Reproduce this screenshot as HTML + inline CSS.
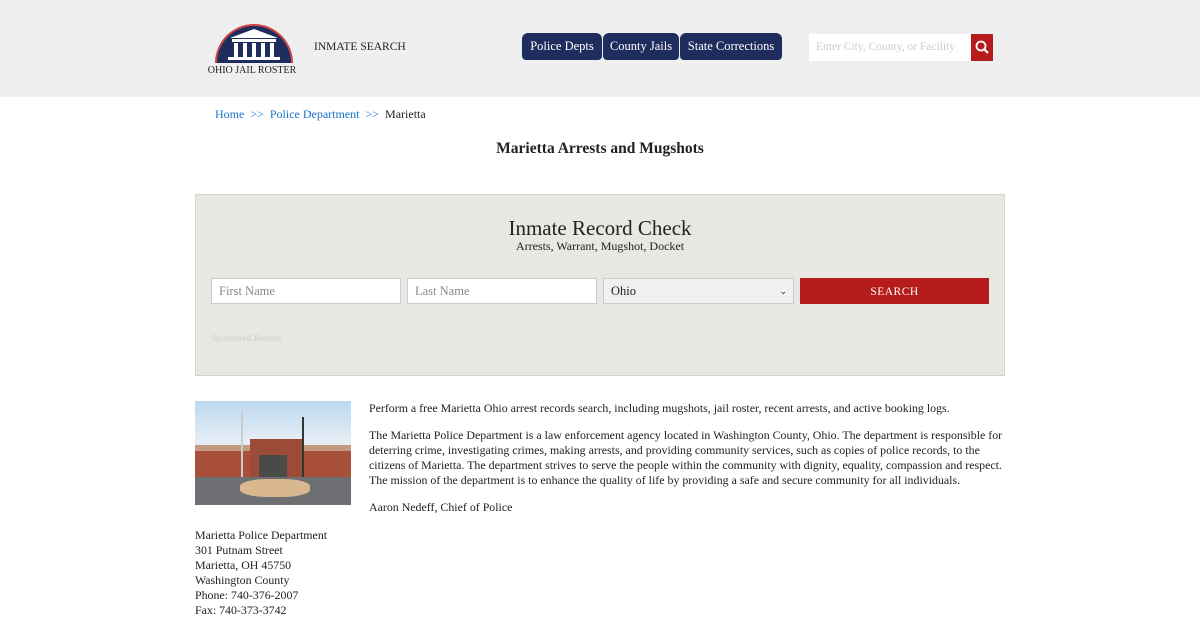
<!DOCTYPE html>
<html><head><meta charset="utf-8"><style>
*{box-sizing:border-box;margin:0;padding:0}
body{width:1200px;height:620px;overflow:hidden;background:#fff;font-family:"Liberation Serif",serif;color:#222}
.hdr{position:absolute;left:0;top:0;width:1200px;height:97px;background:#efefef}
.abs{position:absolute}
.tab{position:absolute;top:33px;height:27px;background:#1f2d5e;color:#fff;font-size:12.5px;line-height:27px;text-align:center;border-radius:6px 6px 4px 4px}
.inp{position:absolute;top:278px;height:26px;background:#fff;border:1px solid #ccc;font-size:12.5px;color:#888;line-height:24px;padding-left:7px}
p{font-size:11.9px;line-height:15px}
</style></head><body>
<div class="hdr"></div>
<svg class="abs" style="left:208px;top:20px" width="92" height="58" viewBox="0 0 92 58">
<defs><clipPath id="c"><rect x="0" y="0" width="92" height="43"/></clipPath></defs>
<circle cx="46" cy="43" r="39" fill="#c44" clip-path="url(#c)"/>
<circle cx="46" cy="43" r="37" fill="#1f2d5e" clip-path="url(#c)"/>
<polygon points="22,18 46,9 70,18" fill="#fff"/>
<rect x="24" y="19" width="44" height="3" fill="#fff"/>
<rect x="26" y="23" width="4" height="14" fill="#fff"/><rect x="35" y="23" width="4" height="14" fill="#fff"/><rect x="44" y="23" width="4" height="14" fill="#fff"/><rect x="53" y="23" width="4" height="14" fill="#fff"/><rect x="62" y="23" width="4" height="14" fill="#fff"/>
<rect x="20" y="37" width="52" height="3" fill="#fff"/>
<text x="44" y="53" font-family="Liberation Serif" font-size="10" text-anchor="middle" fill="#222">OHIO JAIL ROSTER</text>
</svg>
<div class="abs" style="left:314px;top:41px;font-size:11.5px">INMATE SEARCH</div>
<div class="tab" style="left:522px;width:80px">Police Depts</div>
<div class="tab" style="left:603px;width:76px">County Jails</div>
<div class="tab" style="left:680px;width:102px">State Corrections</div>
<div class="abs" style="left:809px;top:34px;width:162px;height:27px;background:#fff;font-size:11.5px;color:#ccc;line-height:27px;padding-left:7px">Enter City, County, or Facility</div>
<div class="abs" style="left:971px;top:34px;width:22px;height:27px;background:#b71c1c"><svg width="22" height="27"><circle cx="10" cy="12" r="4.5" stroke="#fff" stroke-width="1.8" fill="none"/><line x1="13.5" y1="15.5" x2="17" y2="19" stroke="#fff" stroke-width="2.2"/></svg></div>
<div class="abs" style="left:215px;top:107px;font-size:12px"><span style="color:#1a73c8">Home &nbsp;&gt;&gt;&nbsp; Police Department &nbsp;&gt;&gt;&nbsp;</span> Marietta</div>
<div class="abs" style="left:0;width:1200px;top:140px;text-align:center;font-size:15.5px;font-weight:bold">Marietta Arrests and Mugshots</div>
<div class="abs" style="left:195px;top:194px;width:810px;height:182px;background:#e8e7e2;border:1px solid #d4d3cc"></div>
<div class="abs" style="left:195px;width:810px;top:216px;text-align:center;font-size:21px">Inmate Record Check</div>
<div class="abs" style="left:195px;width:810px;top:239px;text-align:center;font-size:12px">Arrests, Warrant, Mugshot, Docket</div>
<div class="inp" style="left:211px;width:190px">First Name</div>
<div class="inp" style="left:407px;width:190px">Last Name</div>
<div class="inp" style="left:603px;width:191px;background:#f0f0f0;color:#222">Ohio<span style="position:absolute;right:6px;font-size:9px">&#8964;</span></div>
<div class="abs" style="left:800px;top:278px;width:189px;height:26px;background:#b71c1c;color:#fff;font-size:11.5px;text-align:center;line-height:28px;letter-spacing:.5px">SEARCH</div>
<div class="abs" style="left:211px;top:334px;font-size:9.5px;color:#ccc">Sponsored Results</div>
<div class="abs" style="left:195px;top:401px;width:156px;height:104px;overflow:hidden;background:linear-gradient(#bcd8ee,#e6eef5 40%)">
<div class="abs" style="left:0;top:46px;width:156px;height:30px;background:#a8503a"></div>
<div class="abs" style="left:0;top:44px;width:156px;height:6px;background:#c49a80"></div>
<div class="abs" style="left:55px;top:38px;width:52px;height:38px;background:#9c4b36"></div>
<div class="abs" style="left:64px;top:54px;width:28px;height:22px;background:#4a4a48"></div>
<div class="abs" style="left:0;top:76px;width:156px;height:28px;background:#6d6f72"></div>
<div class="abs" style="left:45px;top:78px;width:70px;height:18px;background:#d9b890;border-radius:40%"></div>
<div class="abs" style="left:46px;top:10px;width:2px;height:66px;background:#ccc"></div>
<div class="abs" style="left:107px;top:16px;width:2px;height:60px;background:#333"></div>
</div>
<div class="abs" style="left:369px;top:401px;width:640px">
<p>Perform a free Marietta Ohio arrest records search, including mugshots, jail roster, recent arrests, and active booking logs.</p>
<p style="margin-top:12px">The Marietta Police Department is a law enforcement agency located in Washington County, Ohio. The department is responsible for deterring crime, investigating crimes, making arrests, and providing community services, such as copies of police records, to the citizens of Marietta. The department strives to serve the people within the community with dignity, equality, compassion and respect. The mission of the department is to enhance the quality of life by providing a safe and secure community for all individuals.</p>
<p style="margin-top:12px">Aaron Nedeff, Chief of Police</p>
</div>
<div class="abs" style="left:195px;top:528px"><p>Marietta Police Department<br>301 Putnam Street<br>Marietta, OH 45750<br>Washington County<br>Phone: 740-376-2007<br>Fax: 740-373-3742</p></div>
</body></html>
